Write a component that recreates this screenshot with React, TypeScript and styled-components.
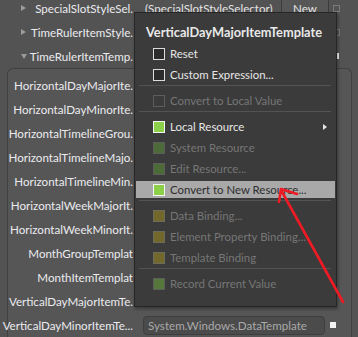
import React from 'react'
import styled, { createGlobalStyle } from 'styled-components'

const GlobalStyle = createGlobalStyle`
    html, body {
        margin: 0;
        padding: 0;
        background: #535353;
        overflow: hidden;
    }
    body {
        font-family: Lato, 'Noto Sans', sans-serif;
    }
`

type Swatch = 'check' | 'checkOff' | 'green' | 'greenOff' | 'olive' | 'record'

const swatchFill: Record<Swatch, string> = {
    check: '#2c2c2c',
    checkOff: 'transparent',
    green: '#8cd04a',
    greenOff: '#4d6a39',
    olive: '#73682b',
    record: '#55773b',
}

const swatchBorder: Record<Swatch, string> = {
    check: '#dcdcdc',
    checkOff: '#5c5c5c',
    green: '#f4f4f4',
    greenOff: '#5d5d5d',
    olive: '#6d6b5c',
    record: '#5d5d5d',
}

const topRows = [
    { name: 'SpecialSlotStyleSel.', open: false, value: '(SpecialSlotStyleSelector)', button: 'New', dim: true },
    { name: 'TimeRulerItemStyle.', open: false, value: '', dim: true },
    { name: 'TimeRulerItemTemp.', open: true, value: '', dim: false },
]

const nestedRows = [
    'HorizontalDayMajorIte.',
    'HorizontalDayMinorIte.',
    'HorizontalTimelineGrou.',
    'HorizontalTimelineMajo.',
    'HorizontalTimelineMin.',
    'HorizontalWeekMajorIt.',
    'HorizontalWeekMinorIt.',
    'MonthGroupTemplat',
    'MonthItemTemplat',
    'VerticalDayMajorItemTe.',
    'VerticalDayMinorItemTe...',
]

type MenuEntry =
    | { kind: 'item'; label: string; swatch: Swatch; off?: boolean; active?: boolean; submenu?: boolean }
    | { kind: 'sep' }

const menu: MenuEntry[] = [
    { kind: 'item', label: 'Reset', swatch: 'check' },
    { kind: 'item', label: 'Custom Expression...', swatch: 'check' },
    { kind: 'sep' },
    { kind: 'item', label: 'Convert to Local Value', swatch: 'checkOff', off: true },
    { kind: 'sep' },
    { kind: 'item', label: 'Local Resource', swatch: 'green', submenu: true },
    { kind: 'item', label: 'System Resource', swatch: 'greenOff', off: true },
    { kind: 'item', label: 'Edit Resource...', swatch: 'greenOff', off: true },
    { kind: 'item', label: 'Convert to New Resource...', swatch: 'green', active: true },
    { kind: 'sep' },
    { kind: 'item', label: 'Data Binding...', swatch: 'olive', off: true },
    { kind: 'item', label: 'Element Property Binding...', swatch: 'olive', off: true },
    { kind: 'item', label: 'Template Binding', swatch: 'olive', off: true },
    { kind: 'sep' },
    { kind: 'item', label: 'Record Current Value', swatch: 'record', off: true },
]

export default function App() {
    return (
        <>
            <GlobalStyle />
            <Page>
                <TopSection>
                    {topRows.map(row => (
                        <PropertyRow key={row.name} $columns='133px 196px 7px' $gap={[10, 4]}>
                            <NameCell>
                                <Expander $open={row.open} />
                                <NameText>{row.name}</NameText>
                            </NameCell>
                            {row.button ? (
                                <ValueCell>
                                    <PlainValue>{row.value}</PlainValue>
                                    <NewButton>{row.button}</NewButton>
                                </ValueCell>
                            ) : (
                                <ValueBox />
                            )}
                            <Marker $dim={row.dim} />
                        </PropertyRow>
                    ))}
                </TopSection>

                <NestedPanel>
                    {nestedRows.map((name, i) => (
                        <PropertyRow key={name} $columns='125px 192px 6px' $gap={[10, 5]}>
                            <NameCell>
                                <NameText>{name}</NameText>
                            </NameCell>
                            {i === nestedRows.length - 1 ? (
                                <ValueBox>System.Windows.DataTemplate</ValueBox>
                            ) : (
                                <span />
                            )}
                            <Marker />
                        </PropertyRow>
                    ))}
                </NestedPanel>

                <Popup>
                    <PopupTitle>VerticalDayMajorItemTemplate</PopupTitle>
                    {menu.map((entry, i) =>
                        entry.kind === 'sep' ? (
                            <Separator key={i} />
                        ) : (
                            <MenuItem key={i} $off={entry.off} $active={entry.active}>
                                <SwatchBox $kind={entry.swatch} />
                                <span>{entry.label}</span>
                                {entry.submenu && <SubmenuArrow />}
                            </MenuItem>
                        )
                    )}
                </Popup>

                <ArrowOverlay viewBox='0 0 358 337' width={358} height={337}>
                    <path
                        d='M343 302 L312 246 L281 190'
                        fill='none'
                        stroke='#ee1b24'
                        strokeWidth={2.6}
                        strokeLinecap='round'
                    />
                    <path
                        d='M279 202 L281 189 L297 194'
                        fill='none'
                        stroke='#ee1b24'
                        strokeWidth={2.6}
                        strokeLinecap='round'
                        strokeLinejoin='round'
                    />
                </ArrowOverlay>
            </Page>
        </>
    )
}

const Page = styled.div`
    position: relative;
    width: 358px;
    height: 337px;
    overflow: hidden;
    background: #535353;
`

const TopSection = styled.div`
    margin-top: -4px;
`

const PropertyRow = styled.div<{ $columns: string; $gap: [number, number] }>`
    display: grid;
    grid-template-columns: ${p => p.$columns};
    height: 24px;
    align-items: center;

    & > :nth-child(2) {
        margin-left: ${p => p.$gap[0]}px;
    }
    & > :nth-child(3) {
        margin-left: ${p => p.$gap[1]}px;
    }
`

const NameCell = styled.div`
    display: flex;
    align-items: center;
    justify-content: flex-end;
    min-width: 0;
    color: #ebebef;
    font-size: 11.6px;
    white-space: nowrap;
`

const NameText = styled.span`
    flex: none;
`

const Expander = styled.span<{ $open: boolean }>`
    flex: none;
    margin-left: 21px;
    margin-right: auto;
    width: 0;
    height: 0;
    ${p =>
        p.$open
            ? `border-left: 3.5px solid transparent;
               border-right: 3.5px solid transparent;
               border-top: 5px solid #9a9a9a;`
            : `border-top: 3.5px solid transparent;
               border-bottom: 3.5px solid transparent;
               border-left: 5px solid #9a9a9a;`}
`

const ValueCell = styled.div`
    display: flex;
    align-items: center;
    justify-content: space-between;
    height: 20px;
`

const PlainValue = styled.span`
    margin-left: 2px;
    color: #e4e4e4;
    font-size: 11.6px;
    white-space: nowrap;
`

const NewButton = styled.div`
    width: 46px;
    height: 19px;
    border: 1px solid #3c3c3c;
    border-radius: 3px;
    background: #575757;
    color: #e4e4e4;
    font-size: 11.6px;
    display: flex;
    align-items: center;
    justify-content: center;
`

const ValueBox = styled.div`
    box-sizing: border-box;
    height: 19px;
    border: 1px solid #3e3e3e;
    border-radius: 4px;
    background: #4b4b4b;
    color: #a9a9a9;
    font-size: 11.6px;
    padding-left: 4px;
    display: flex;
    align-items: center;
    white-space: nowrap;
    overflow: hidden;
`

const Marker = styled.span<{ $dim?: boolean }>`
    box-sizing: border-box;
    width: ${p => (p.$dim ? 7 : 6)}px;
    height: ${p => (p.$dim ? 7 : 6)}px;
    border: 1px solid ${p => (p.$dim ? '#7a7a7a' : '#f2f2f2')};
    background: ${p => (p.$dim ? 'transparent' : '#f2f2f2')};
`

const NestedPanel = styled.div`
    margin: 0 6px 0 7px;
    padding-top: 4px;
    border: 1px solid #404040;
    border-bottom: none;
    border-radius: 6px 6px 0 0;
    background: #565656;
`

const Popup = styled.div`
    position: absolute;
    left: 134px;
    top: 12px;
    width: 199px;
    padding: 9px 1px 12px;
    border: 1px solid #262626;
    background: #3b3b3b;
    box-shadow: 1px 2px 3px rgba(0, 0, 0, 0.35);
    font-size: 11.4px;
`

const PopupTitle = styled.div`
    height: 21px;
    line-height: 21px;
    padding-left: 10px;
    color: #e8e8e8;
    font-weight: 700;
    font-size: 12.8px;
    white-space: nowrap;
`

const MenuItem = styled.div<{ $off?: boolean; $active?: boolean }>`
    box-sizing: border-box;
    height: 21px;
    display: flex;
    align-items: center;
    gap: 5px;
    padding-left: 17px;
    border-top: 2px solid transparent;
    border-bottom: 2px solid transparent;
    background: ${p => (p.$active ? '#a9a9a9' : 'transparent')};
    background-clip: padding-box;
    color: ${p => (p.$active ? '#2e2e2e' : p.$off ? '#767676' : '#e6e6e6')};
    white-space: nowrap;
`

const SwatchBox = styled.span<{ $kind: Swatch }>`
    box-sizing: border-box;
    flex: none;
    width: 12px;
    height: 12px;
    border: 1px solid ${p => swatchBorder[p.$kind]};
    background: ${p => swatchFill[p.$kind]};
`

const SubmenuArrow = styled.span`
    margin-left: auto;
    margin-right: 8px;
    width: 0;
    height: 0;
    border-top: 3.5px solid transparent;
    border-bottom: 3.5px solid transparent;
    border-left: 4px solid #e6e6e6;
`

const Separator = styled.div`
    height: 1px;
    margin: 0 4px 4px 3px;
    background: #535353;
`

const ArrowOverlay = styled.svg`
    position: absolute;
    left: 0;
    top: 0;
    pointer-events: none;
`
